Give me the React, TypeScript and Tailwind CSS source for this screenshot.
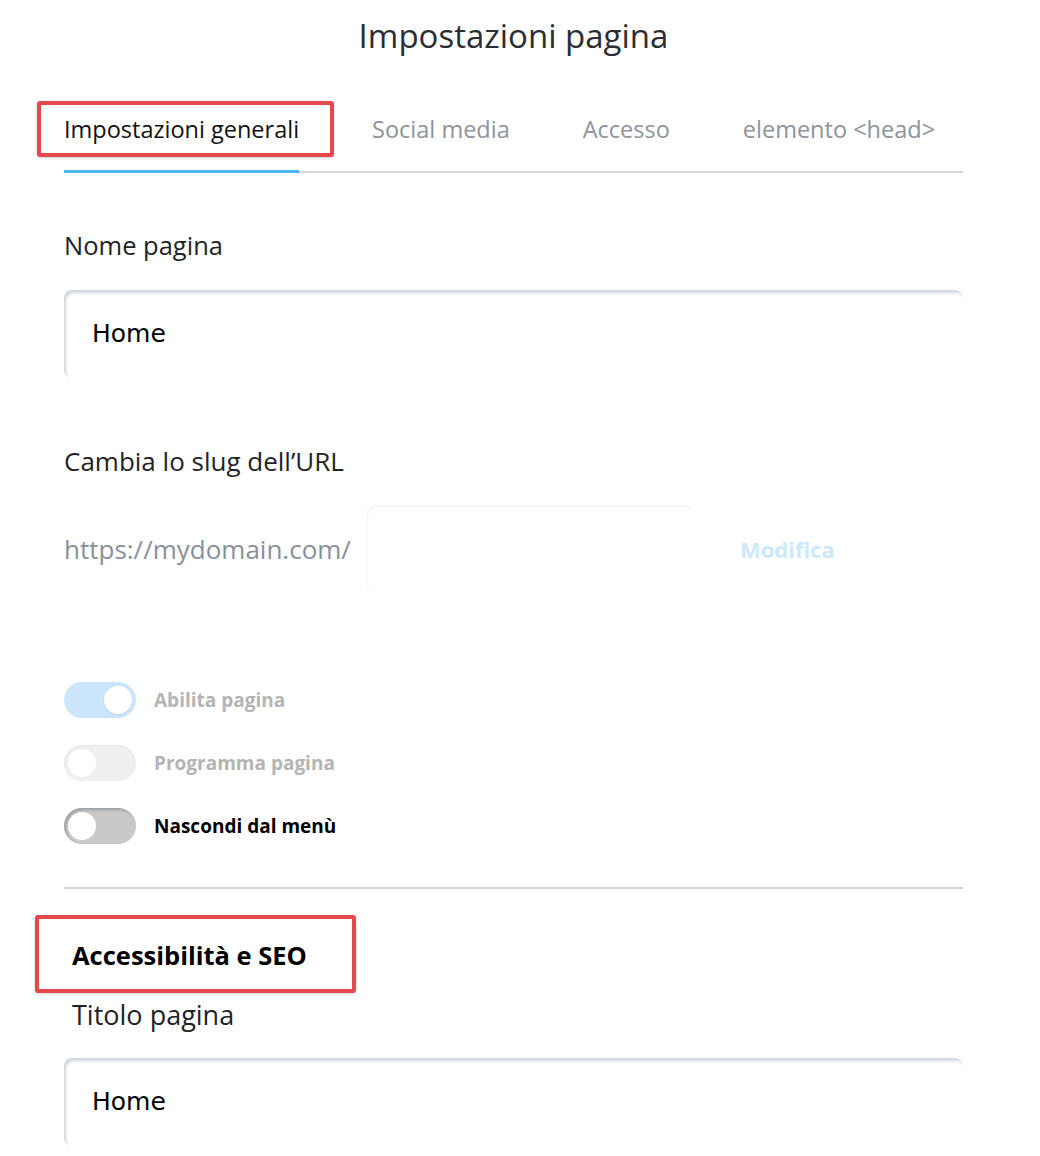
import React from "react";

const FONT = "font-['Open_Sans','Noto_Sans',sans-serif]";
const INPUT_FONT = "font-['DejaVu_Sans','Noto_Sans',sans-serif]";

const TABS = ["Impostazioni generali", "Social media", "Accesso", "elemento <head>"];

function Toggle({ state }: { state: "on" | "disabled" | "off" }) {
  if (state === "on") {
    return (
      <div className="flex h-[36px] w-[72px] items-center justify-end rounded-full bg-[#cbe5fa] px-[4px]">
        <div className="h-[28px] w-[28px] rounded-full bg-white shadow-[0_1px_2px_rgba(0,0,0,0.08)]" />
      </div>
    );
  }
  if (state === "disabled") {
    return (
      <div className="flex h-[36px] w-[72px] items-center rounded-full bg-[#efefef] px-[4px] shadow-[inset_1px_1px_2px_rgba(0,0,0,0.04)]">
        <div className="h-[28px] w-[28px] rounded-full bg-white" />
      </div>
    );
  }
  return (
    <div className="flex h-[36px] w-[72px] items-center rounded-full bg-[#c9c9c9] px-[4px] shadow-[inset_2px_2px_3px_rgba(70,80,95,0.35)]">
      <div className="h-[28px] w-[28px] rounded-full bg-white" />
    </div>
  );
}

function TextInput({ value }: { value: string }) {
  return (
    <div className="flex h-[88px] w-full items-center rounded-l-[8px] rounded-tr-[8px] bg-white pl-[28px] shadow-[inset_2px_3px_3px_rgba(120,135,155,0.35)]">
      <span className={`${INPUT_FONT} text-[25px] text-black`}>{value}</span>
    </div>
  );
}

export default function App() {
  return (
    <div className={`relative min-h-[1156px] w-[1040px] bg-white ${FONT}`}>
      <div className="ml-[64px] flex w-[899px] flex-col">
        <h1 className="pt-[16px] text-center text-[33px] leading-[40px] text-[#2a2e33]">
          Impostazioni pagina
        </h1>

        {/* Tabs */}
        <div className="mt-[58px] flex gap-[73px] border-b-2 border-[#d3d5d8]">
          {TABS.map((t, i) => (
            <div
              key={t}
              className={`-mb-[2px] pb-[26px] text-[23.5px] leading-[30px] ${
                i === 0
                  ? "border-b-[3px] border-[#4cb6f4] text-[#111]"
                  : "border-b-[3px] border-transparent text-[#8e949b]"
              }`}
            >
              {t}
            </div>
          ))}
        </div>

        <div className="mt-[57px] text-[25.5px] leading-[30px] text-[#1f2328]">Nome pagina</div>
        <div className="mt-[30px]">
          <TextInput value="Home" />
        </div>

        <div className="mt-[68px] text-[26px] leading-[30px] text-[#1f2328]">
          Cambia lo slug dell’URL
        </div>
        <div className="mt-[29px] flex h-[88px] items-center">
          <span className="text-[26px] text-[#8a9099]">https://mydomain.com/</span>
          <div className="ml-[15px] h-[88px] w-[328px] rounded-[10px] bg-white shadow-[inset_1px_2px_3px_rgba(120,135,155,0.1)]" />
          <span className="ml-[46px] text-[22px] font-bold text-[#cce8fb]">Modifica</span>
        </div>

        {/* Toggles */}
        <div className="mt-[89px] flex flex-col gap-[27px]">
          <div className="flex items-center gap-[18px]">
            <Toggle state="on" />
            <span className="text-[19px] font-bold text-[#b4b4b4]">Abilita pagina</span>
          </div>
          <div className="flex items-center gap-[18px]">
            <Toggle state="disabled" />
            <span className="text-[19px] font-bold text-[#b4b4b4]">Programma pagina</span>
          </div>
          <div className="flex items-center gap-[18px]">
            <Toggle state="off" />
            <span className="text-[19px] font-bold text-black">Nascondi dal menù</span>
          </div>
        </div>

        <div className="mt-[43px] h-[2px] w-full bg-[#d3d5d8]" />

        <div className="mt-[51px] pl-[8px] text-[25.5px] font-bold leading-[30px] text-black">
          Accessibilità e SEO
        </div>
        <div className="mt-[30px] pl-[8px] text-[27px] leading-[30px] text-[#1f2328]">
          Titolo pagina
        </div>
        <div className="mt-[28px]">
          <TextInput value="Home" />
        </div>
      </div>

      {/* annotation boxes */}
      <div className="absolute left-[37px] top-[101px] h-[56px] w-[297px] rounded-[3px] border-[4px] border-[#e5484d] shadow-[0_1px_3px_rgba(0,0,0,0.2)]" />
      <div className="absolute left-[35px] top-[915px] h-[78px] w-[321px] rounded-[3px] border-[4px] border-[#e5484d] shadow-[0_1px_3px_rgba(0,0,0,0.2)]" />
    </div>
  );
}
